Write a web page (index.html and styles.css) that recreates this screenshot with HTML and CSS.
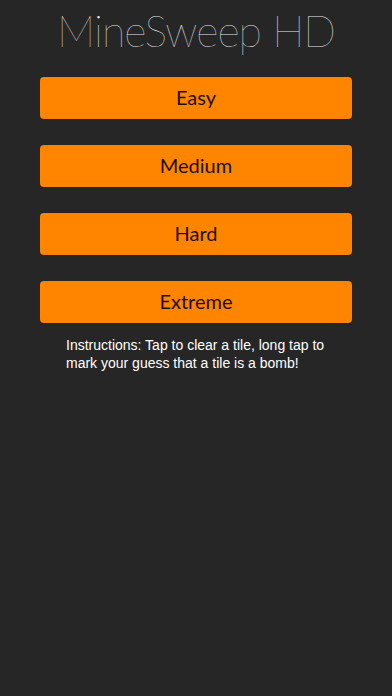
FILE: index.html
```html
<!DOCTYPE html>
<html lang="en">
<head>
  <meta charset="UTF-8">
  <meta name="viewport" content="width=device-width, initial-scale=1.0">
  <title>MineSweep HD</title>
  <link rel="stylesheet" href="styles.css">
</head>
<body>
  <div class="app">
    <h1 class="title">MineSweep HD</h1>
    <div class="levels">
      <button class="level-button">Easy</button>
      <button class="level-button">Medium</button>
      <button class="level-button">Hard</button>
      <button class="level-button">Extreme</button>
    </div>
    <p class="instructions">Instructions: Tap to clear a tile, long tap to mark your guess that a tile is a bomb!</p>
  </div>
</body>
</html>
```

FILE: styles.css
```css
html, body { margin: 0; padding: 0; background-color: #262626; }
body { font-family: "Liberation Sans", Arial, sans-serif; }
.app { width: 392px; height: 696px; box-sizing: border-box; padding-top: 6px; }
.title {
  margin: 0; text-align: center; color: #e8e8e8;
  font-family: Lato, "Open Sans", sans-serif; font-weight: 100; font-size: 43px; line-height: 50px;
  letter-spacing: -1px;
}
.levels { display: flex; flex-direction: column; gap: 26px; padding: 21px 40px 0 40px; }
.level-button {
  height: 42px; border: none; border-radius: 4px; background-color: #ff8400;
  color: #1e1000; font-family: Lato, "Open Sans", sans-serif; font-size: 20px; padding: 0 0 3px 0;
}
.instructions {
  margin: 13px 0 0 66px; width: 280px; color: #fff; font-size: 14px; line-height: 18px;
}
```
